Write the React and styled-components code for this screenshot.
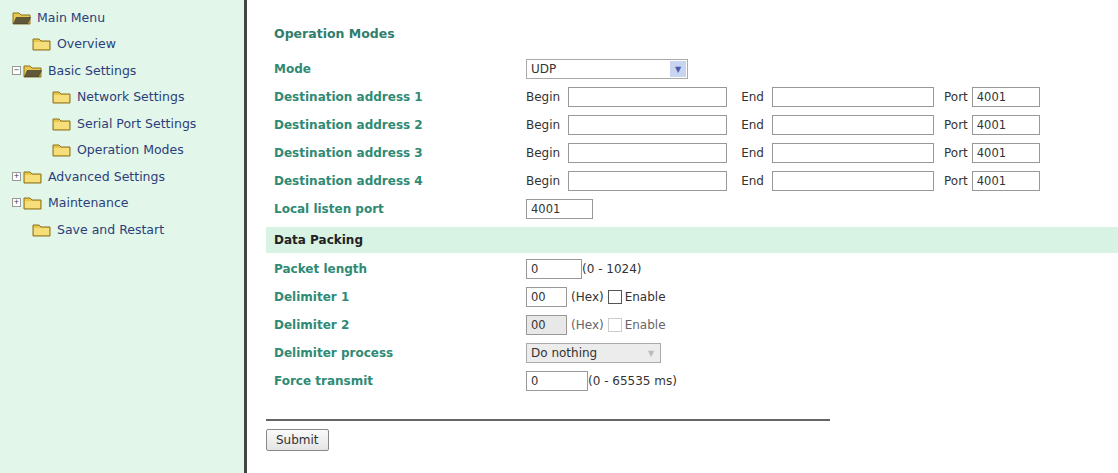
import React from 'react';
import styled, { createGlobalStyle } from 'styled-components';

const Global = createGlobalStyle`
  html, body { margin: 0; padding: 0; background: #fff; }
  body { font-family: "DejaVu Sans", Verdana, sans-serif; font-size: 12px; }
`;

const Page = styled.div`
  display: flex;
  width: 1118px;
  height: 473px;
  overflow: hidden;
`;

const Sidebar = styled.div`
  width: 247px;
  flex-shrink: 0;
  background: #e2f6ea;
  border-right: 3px solid #444;
  padding: 4px 0 0 12px;
  box-sizing: border-box;
`;

const TreeItem = styled.div`
  display: flex;
  align-items: center;
  height: 26.5px;
  padding-left: ${p => p.level * 20}px;
  color: #2c3e7a;
  font-size: 12.5px;
  gap: 5px;
`;

const Toggle = styled.span`
  width: 7px;
  height: 7px;
  border: 1px solid #999;
  font-size: 7px;
  line-height: 7px;
  text-align: center;
  color: #333;
  background: #fff;
  margin-right: -3px;
`;

const Folder = ({ open }) => (
  <svg width="20" height="15" viewBox="0 0 20 15">
    <path d="M1 3 h6 l2 2 h9 v9 h-17 z" fill="#e8c84a" stroke="#8a7020" strokeWidth="1" />
    {open ? <path d="M4 7 h15 l-3 7 h-15 z" fill="#333" opacity="0.75" /> : <rect x="2" y="6" width="15" height="7" fill="#f6df7a" />}
  </svg>
);

const Main = styled.div`
  flex: 1;
  padding: 26px 0 0 19px;
`;

const Title = styled.div`
  color: #2f7e6c;
  font-weight: bold;
  font-size: 12.5px;
  padding-left: 8px;
  height: 29px;
`;

const Row = styled.div`
  display: flex;
  align-items: center;
  height: 28px;
  padding-left: 8px;
`;

const Label = styled.div`
  width: 252px;
  color: #2f8a74;
  font-weight: bold;
  font-size: 12px;
`;

const Text = styled.span`
  color: #333;
  margin: 0 ${p => p.mr || 4}px 0 ${p => p.ml || 0}px;
  font-size: 12px;
`;

const Input = styled.input`
  width: ${p => p.w}px;
  height: 20px;
  box-sizing: border-box;
  border: 1px solid #999;
  font-family: inherit;
  font-size: 11.5px;
  padding: 0 4px;
  color: #333;
  background: ${p => (p.disabled ? '#e8e8e8' : '#fff')};
`;

const Select = styled.div`
  width: ${p => p.w}px;
  height: 20px;
  box-sizing: border-box;
  border: 1px solid #aaa;
  display: flex;
  align-items: center;
  justify-content: space-between;
  padding-left: 4px;
  color: #333;
  font-size: 12px;
  background: ${p => (p.disabled ? '#ececec' : '#fff')};
`;

const Arrow = styled.span`
  width: 16px;
  height: 16px;
  margin-right: 1px;
  background: ${p => (p.disabled ? 'transparent' : '#c8d4f0')};
  color: ${p => (p.disabled ? '#bbb' : '#4a5ea8')};
  font-size: 8px;
  display: flex;
  align-items: center;
  justify-content: center;
`;

const Check = styled.span`
  width: 12px;
  height: 12px;
  border: 1px solid ${p => (p.disabled ? '#ccc' : '#555')};
  margin: 0 3px 0 0;
  display: inline-block;
`;

const Section = styled.div`
  background: #d8f3e4;
  height: 26px;
  display: flex;
  align-items: center;
  padding-left: 8px;
  margin: 4px 0 2px;
  font-weight: bold;
  color: #222;
`;

const Divider = styled.div`
  width: 564px;
  border-top: 2px solid #666;
  margin: 24px 0 8px;
`;

const Button = styled.button`
  font-family: inherit;
  font-size: 12px;
  padding: 3px 9px;
  border: 1px solid #888;
  border-radius: 2px;
  background: linear-gradient(#fafafa, #e4e4e4);
  color: #333;
`;

const tree = [
  { t: 'Main Menu', l: 0, open: true },
  { t: 'Overview', l: 1 },
  { t: 'Basic Settings', l: 0, open: true, tog: '−' },
  { t: 'Network Settings', l: 2 },
  { t: 'Serial Port Settings', l: 2 },
  { t: 'Operation Modes', l: 2 },
  { t: 'Advanced Settings', l: 0, tog: '+' },
  { t: 'Maintenance', l: 0, tog: '+' },
  { t: 'Save and Restart', l: 1 },
];

export default function App() {
  return (
    <Page>
      <Global />
      <Sidebar>
        {tree.map(i => (
          <TreeItem key={i.t} level={i.l === 0 && i.tog ? 0 : i.l}>
            {i.tog && <Toggle>{i.tog}</Toggle>}
            <Folder open={i.open} />
            {i.t}
          </TreeItem>
        ))}
      </Sidebar>
      <Main>
        <Title>Operation Modes</Title>
        <Row>
          <Label>Mode</Label>
          <Select w={162}>UDP<Arrow>▼</Arrow></Select>
        </Row>
        {[1, 2, 3, 4].map(n => (
          <Row key={n}>
            <Label>Destination address {n}</Label>
            <Text mr={8}>Begin</Text>
            <Input w={159} />
            <Text ml={14} mr={8}>End</Text>
            <Input w={162} />
            <Text ml={10}>Port</Text>
            <Input w={68} defaultValue="4001" />
          </Row>
        ))}
        <Row>
          <Label>Local listen port</Label>
          <Input w={67} defaultValue="4001" />
        </Row>
        <Section>Data Packing</Section>
        <Row>
          <Label>Packet length</Label>
          <Input w={56} defaultValue="0" />
          <Text>(0 - 1024)</Text>
        </Row>
        <Row>
          <Label>Delimiter 1</Label>
          <Input w={41} defaultValue="00" />
          <Text ml={4}>(Hex)</Text>
          <Check />
          <Text>Enable</Text>
        </Row>
        <Row>
          <Label>Delimiter 2</Label>
          <Input w={41} defaultValue="00" disabled />
          <Text ml={4} style={{ color: '#666' }}>(Hex)</Text>
          <Check disabled />
          <Text style={{ color: '#666' }}>Enable</Text>
        </Row>
        <Row>
          <Label>Delimiter process</Label>
          <Select w={135} disabled>Do nothing<Arrow disabled>▼</Arrow></Select>
        </Row>
        <Row>
          <Label>Force transmit</Label>
          <Input w={62} defaultValue="0" />
          <Text>(0 - 65535 ms)</Text>
        </Row>
        <Divider />
        <Button>Submit</Button>
      </Main>
    </Page>
  );
}
